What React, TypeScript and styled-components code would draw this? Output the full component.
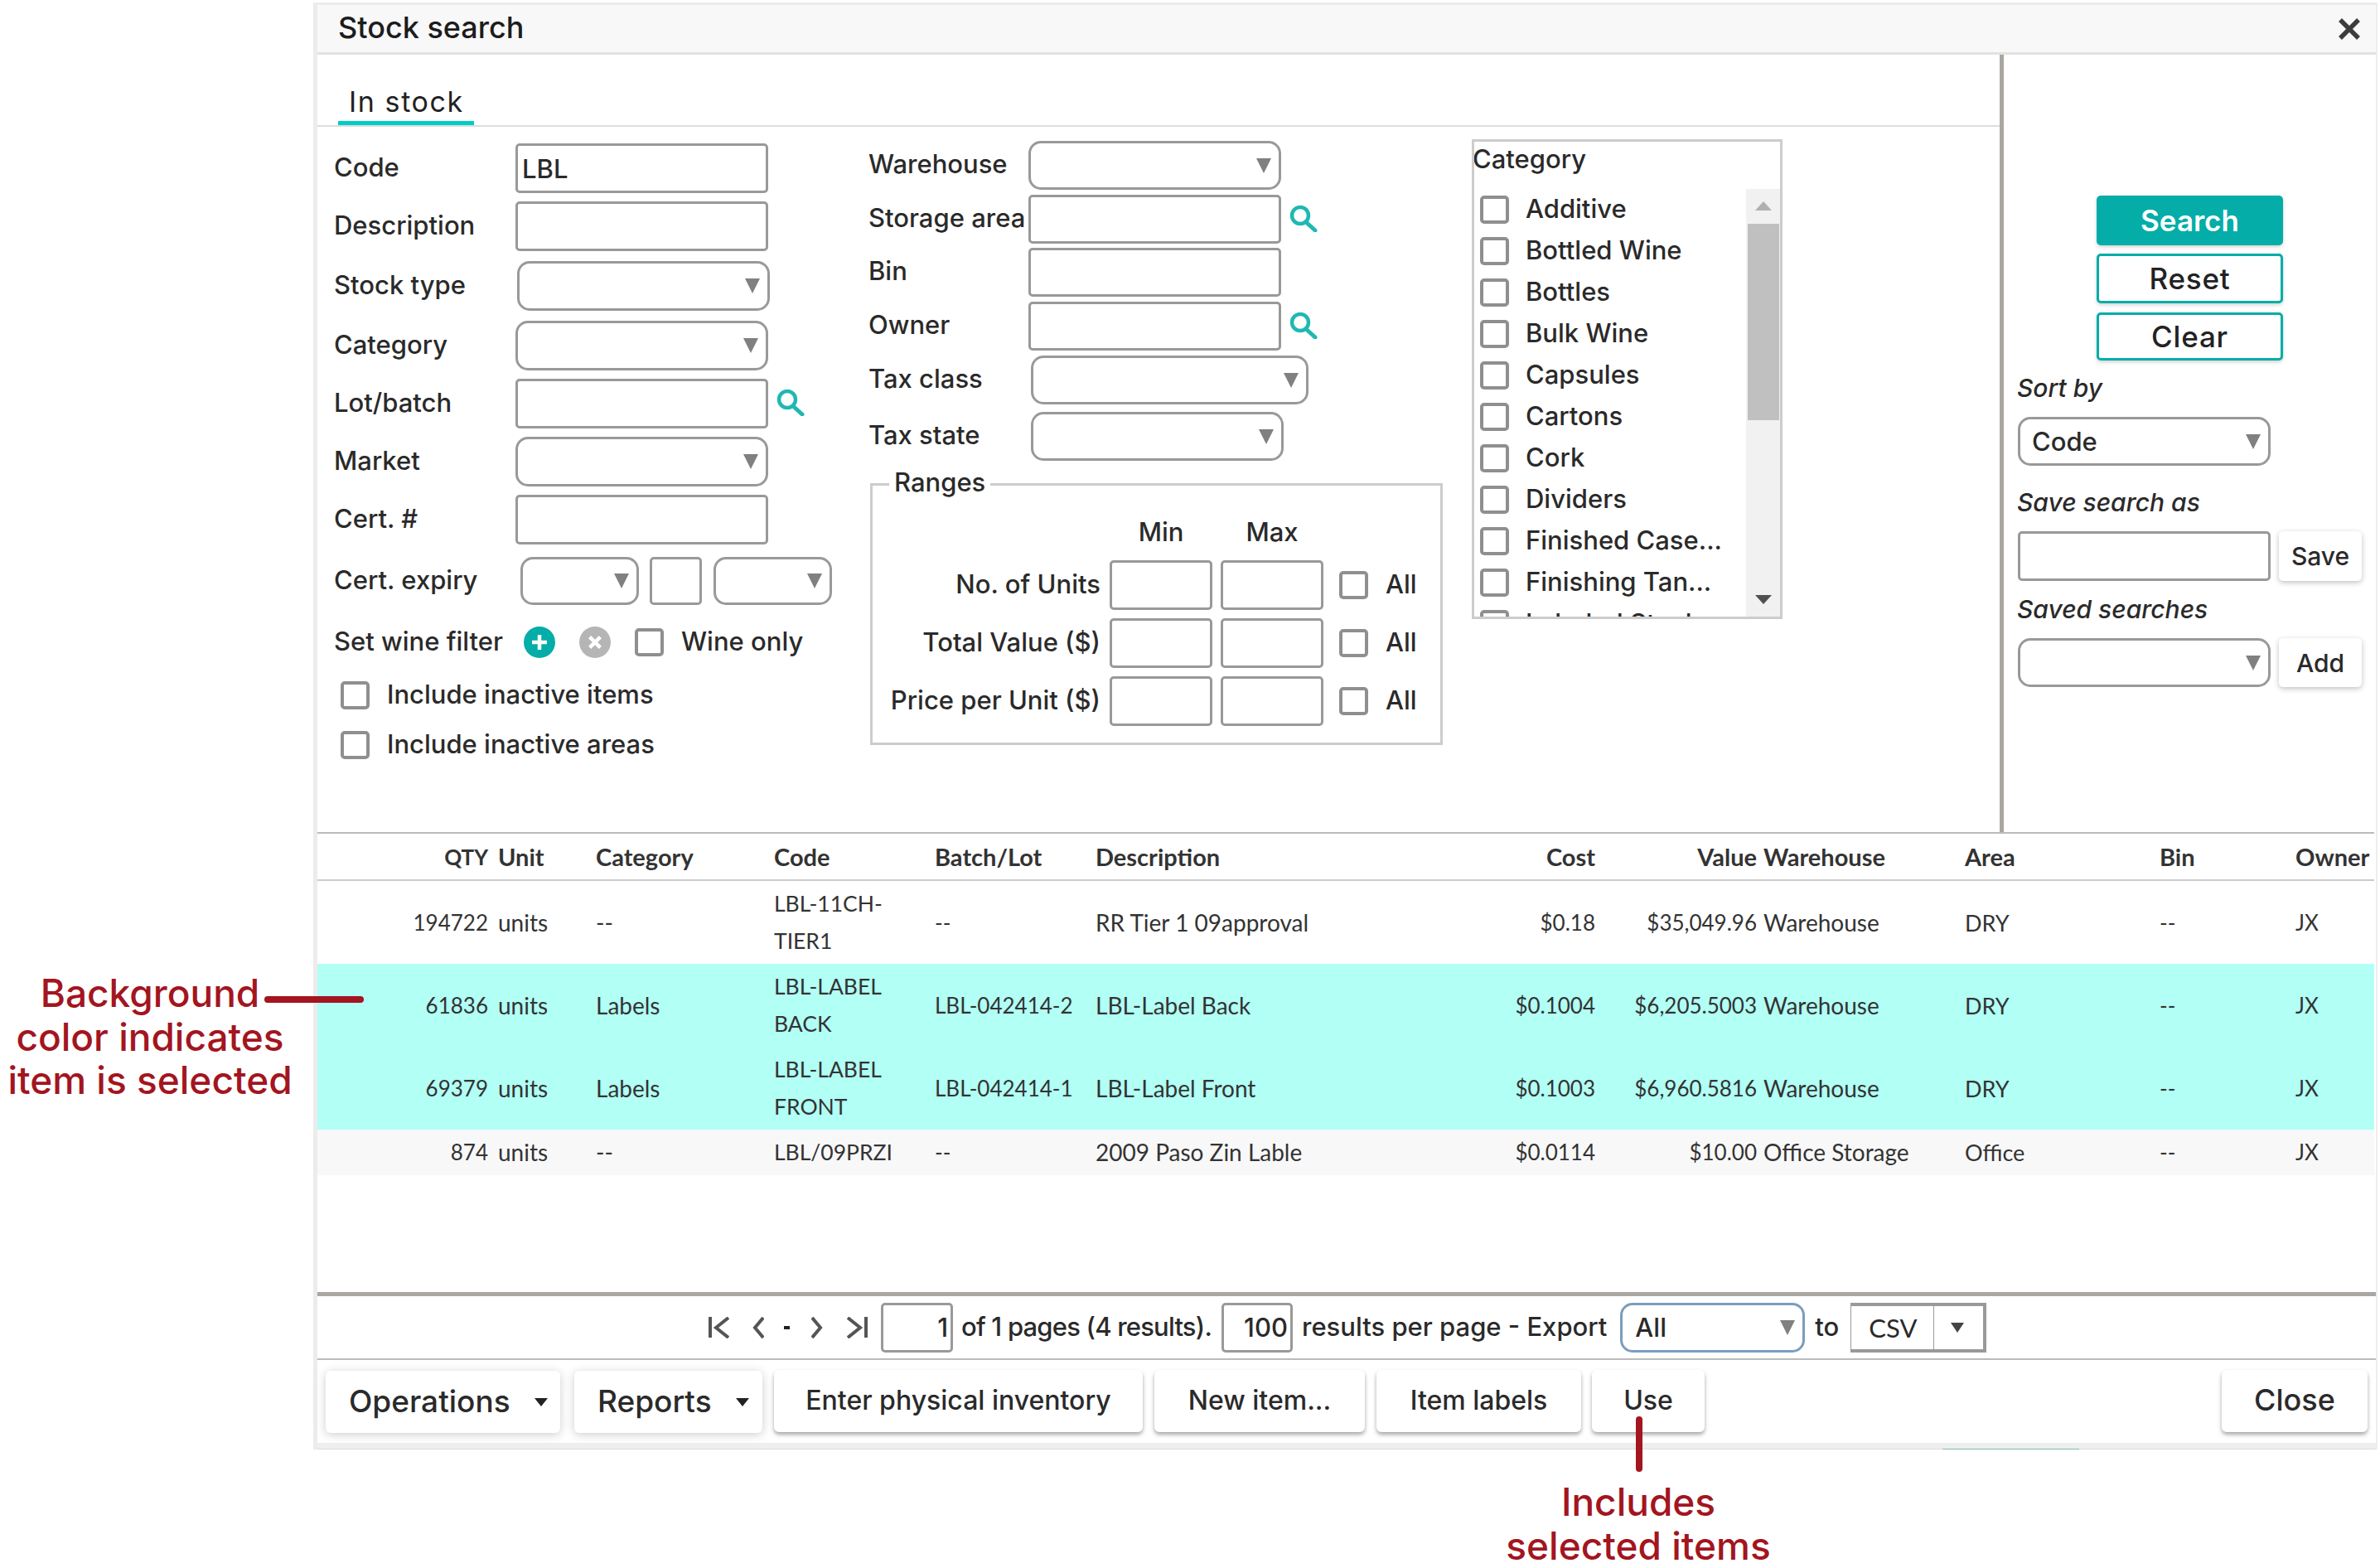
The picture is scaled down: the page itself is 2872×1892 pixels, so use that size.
import styled, { createGlobalStyle } from "styled-components";

const GlobalStyle = createGlobalStyle`
  html, body {
    margin: 0;
    background: #fff;
    overflow: hidden;
  }
  * { box-sizing: border-box; }
`;

const TEAL = "#04ada8";
const UI_FONT = `"Inter", "Open Sans", sans-serif`;
const TABLE_FONT = `"Lato", "Open Sans", sans-serif`;

const categories = [
  "Additive",
  "Bottled Wine",
  "Bottles",
  "Bulk Wine",
  "Capsules",
  "Cartons",
  "Cork",
  "Dividers",
  "Finished Case...",
  "Finishing Tan...",
  "Labeled Stock",
];

const columns = [
  { title: "QTY", width: 206, align: "right", size: 26, headSize: 26 },
  { title: "Unit", width: 130, pad: 12, size: 28 },
  { title: "Category", width: 215, size: 28 },
  { title: "Code", width: 194, padRight: 20, size: 26.5 },
  { title: "Batch/Lot", width: 194, size: 26 },
  { title: "Description", width: 463, size: 28 },
  { title: "Cost", width: 140, align: "right", size: 26 },
  { title: "Value", width: 195, align: "right", size: 26 },
  { title: "Warehouse", width: 251, pad: 8, size: 28 },
  { title: "Area", width: 235, size: 27 },
  { title: "Bin", width: 164, size: 26 },
  { title: "Owner", width: 95, size: 26 },
];

const rows = [
  { kind: "plain", cells: ["194722", "units", "--", "LBL-11CH-TIER1", "--", "RR Tier 1 09approval", "$0.18", "$35,049.96", "Warehouse", "DRY", "--", "JX"] },
  { kind: "selected", cells: ["61836", "units", "Labels", "LBL-LABEL BACK", "LBL-042414-2", "LBL-Label Back", "$0.1004", "$6,205.5003", "Warehouse", "DRY", "--", "JX"] },
  { kind: "selected", cells: ["69379", "units", "Labels", "LBL-LABEL FRONT", "LBL-042414-1", "LBL-Label Front", "$0.1003", "$6,960.5816", "Warehouse", "DRY", "--", "JX"] },
  { kind: "alt", cells: ["874", "units", "--", "LBL/09PRZI", "--", "2009 Paso Zin Lable", "$0.0114", "$10.00", "Office Storage", "Office", "--", "JX"] },
];

const ranges = ["No. of Units", "Total Value ($)", "Price per Unit ($)"];

function SearchIcon() {
  return (
    <IconSlot viewBox="0 0 34 32" width="34" height="32" fill="none" stroke="#1fb8b2">
      <circle cx="13" cy="12" r="10" strokeWidth="4.5" />
      <path d="M20 20 L31 30" strokeWidth="5" strokeLinecap="round" />
    </IconSlot>
  );
}

function CircleIcon({ color, rotate }: { color: string; rotate?: boolean }) {
  return (
    <BlurIcon viewBox="0 0 38 38" width="38" height="38">
      <circle cx="19" cy="19" r="19" fill={color} />
      <path
        d="M19 10 V28 M10 19 H28"
        stroke="#fff"
        strokeWidth="4.5"
        transform={rotate ? "rotate(45 19 19)" : undefined}
      />
    </BlurIcon>
  );
}

function PagerIcon({ d, width, after }: { d: string; width: number; after: number }) {
  return (
    <PagerGlyph
      $after={after}
      viewBox={`0 0 ${width} 26`}
      width={width}
      height="26"
      fill="none"
      stroke="#555"
    >
      <path d={d} strokeWidth="4" />
    </PagerGlyph>
  );
}

function Check() {
  return <CheckBox />;
}

export default function App() {
  return (
    <Page>
      <GlobalStyle />
      <Dialog>
        <TitleBar>
          <Title>Stock search</Title>
          <svg viewBox="0 0 26 26" width="26" height="26" stroke="#3c3c3c" strokeWidth="5.5">
            <path d="M2 2 L24 24 M24 2 L2 24" />
          </svg>
        </TitleBar>

        <TopSection>
          <SearchForm>
            <TabStrip>
              <Tab>In stock</Tab>
            </TabStrip>
            <FormArea>
              <FormColumn $width={645}>
                <FieldRow $top={20}>
                  <Label $width={219}>Code</Label>
                  <TextBox $width={305} defaultValue="LBL" readOnly />
                </FieldRow>
                <FieldRow $top={10}>
                  <Label $width={219}>Description</Label>
                  <TextBox $width={305} readOnly />
                </FieldRow>
                <FieldRow $top={12}>
                  <Label $width={221}>Stock type</Label>
                  <Select $width={305} />
                </FieldRow>
                <FieldRow $top={12}>
                  <Label $width={219}>Category</Label>
                  <Select $width={305} />
                </FieldRow>
                <FieldRow $top={10}>
                  <Label $width={219}>Lot/batch</Label>
                  <TextBox $width={305} readOnly />
                  <SearchSlot>
                    <SearchIcon />
                  </SearchSlot>
                </FieldRow>
                <FieldRow $top={10}>
                  <Label $width={219}>Market</Label>
                  <Select $width={305} />
                </FieldRow>
                <FieldRow $top={10}>
                  <Label $width={219}>Cert. #</Label>
                  <TextBox $width={305} readOnly />
                </FieldRow>
                <FieldRow $top={15}>
                  <Label $width={225}>Cert. expiry</Label>
                  <Select $width={143} $height={58} />
                  <TextBox $width={63} $height={58} $left={13} readOnly />
                  <Select $width={143} $height={58} $left={14} />
                </FieldRow>
                <WineRow>
                  <Label $width={229}>Set wine filter</Label>
                  <CircleIcon color={TEAL} />
                  <CircleSpacer />
                  <CircleIcon color="#b5b5b5" rotate />
                  <CircleSpacer />
                  <Check />
                  <CheckText>Wine only</CheckText>
                </WineRow>
                <InactiveRow $top={28}>
                  <Check />
                  <CheckText>Include inactive items</CheckText>
                </InactiveRow>
                <InactiveRow $top={26}>
                  <Check />
                  <CheckText>Include inactive areas</CheckText>
                </InactiveRow>
              </FormColumn>

              <FormColumn $width={728}>
                <FieldRow $top={17}>
                  <Label $width={193}>Warehouse</Label>
                  <Select $width={305} $height={59} />
                </FieldRow>
                <FieldRow $top={6}>
                  <Label $width={193}>Storage area</Label>
                  <TextBox $width={305} $height={59} readOnly />
                  <SearchSlot>
                    <SearchIcon />
                  </SearchSlot>
                </FieldRow>
                <FieldRow $top={5}>
                  <Label $width={193}>Bin</Label>
                  <TextBox $width={305} $height={59} readOnly />
                </FieldRow>
                <FieldRow $top={6}>
                  <Label $width={193}>Owner</Label>
                  <TextBox $width={305} $height={59} readOnly />
                  <SearchSlot>
                    <SearchIcon />
                  </SearchSlot>
                </FieldRow>
                <FieldRow $top={6}>
                  <Label $width={196}>Tax class</Label>
                  <Select $width={335} $height={59} />
                </FieldRow>
                <FieldRow $top={9}>
                  <Label $width={196}>Tax state</Label>
                  <Select $width={305} $height={59} />
                </FieldRow>
                <Ranges>
                  <RangesLegend>Ranges</RangesLegend>
                  <RangeGrid>
                    <span />
                    <RangeHead>Min</RangeHead>
                    <RangeHead>Max</RangeHead>
                    <span />
                    {ranges.map((name) => (
                      <RangeRow key={name}>
                        <RangeLabel>{name}</RangeLabel>
                        <TextBox $width={124} readOnly />
                        <TextBox $width={124} readOnly />
                        <RangeAll>
                          <Check />
                          <CheckText>All</CheckText>
                        </RangeAll>
                      </RangeRow>
                    ))}
                  </RangeGrid>
                </Ranges>
              </FormColumn>

              <CategoryBox>
                <CategoryTitle>Category</CategoryTitle>
                <CategoryBody>
                  <CategoryList>
                    {categories.map((name) => (
                      <CategoryItem key={name}>
                        <Check />
                        <CheckText $gap={20}>{name}</CheckText>
                      </CategoryItem>
                    ))}
                  </CategoryList>
                  <ScrollTrack>
                    <ScrollArrow $up />
                    <ScrollThumb />
                    <ScrollArrow />
                  </ScrollTrack>
                </CategoryBody>
              </CategoryBox>
            </FormArea>
          </SearchForm>

          <SidePanel>
            <ActionButton $primary>Search</ActionButton>
            <ActionButton>Reset</ActionButton>
            <ActionButton $height={58} $top={11}>Clear</ActionButton>
            <SideLabel $top={13}>Sort by</SideLabel>
            <SideRow>
              <Select $width={305} $height={59}>
                <SelectText $left={14}>Code</SelectText>
              </Select>
            </SideRow>
            <SideLabel $top={24}>Save search as</SideLabel>
            <SideRow>
              <TextBox $width={305} readOnly />
              <SmallButton>Save</SmallButton>
            </SideRow>
            <SideLabel $top={14}>Saved searches</SideLabel>
            <SideRow>
              <Select $width={305} $height={59} />
              <SmallButton>Add</SmallButton>
            </SideRow>
          </SidePanel>
        </TopSection>

        <TableArea>
          <ResultTable>
            <colgroup>
              {columns.map((col) => (
                <col key={col.title} width={col.width} />
              ))}
            </colgroup>
            <thead>
              <tr>
                {columns.map((col) => (
                  <HeadCell key={col.title} $align={col.align} $pad={col.pad} $size={col.headSize}>
                    {col.title}
                  </HeadCell>
                ))}
              </tr>
            </thead>
            <tbody>
              {rows.map((row) => (
                <DataRow key={row.cells[0]} $kind={row.kind}>
                  {row.cells.map((cell, i) => (
                    <DataCell
                      key={i}
                      $align={columns[i].align}
                      $pad={columns[i].pad}
                      $padRight={columns[i].padRight}
                      $size={columns[i].size}
                    >
                      {cell}
                    </DataCell>
                  ))}
                </DataRow>
              ))}
            </tbody>
          </ResultTable>
        </TableArea>

        <Pager>
          <PagerIcon width={25} after={28} d="M2 0 V25 M24 1 L9 13 L24 25" />
          <PagerIcon width={14} after={24} d="M13 1 L3 13 L13 25" />
          <PagerDash />
          <PagerIcon width={14} after={29} d="M1 1 L11 13 L1 25" />
          <PagerIcon width={25} after={16} d="M1 1 L16 13 L1 25 M23 0 V25" />
          <PageInput $width={87} defaultValue="1" readOnly />
          <PagerText $left={10} $tight>of 1 pages (4 results).</PagerText>
          <PageInput $width={86} $left={12} defaultValue="100" readOnly />
          <PagerText $left={11}>results per page - Export</PagerText>
          <Select $width={223} $focused $left={16}>
            <SelectText $left={15}>All</SelectText>
          </Select>
          <PagerText $left={12}>to</PagerText>
          <ComboBox>
            <ComboValue>CSV</ComboValue>
            <ComboArrow />
          </ComboBox>
        </Pager>

        <Footer>
          <MenuButton $width={283}>
            Operations
            <MenuCaret />
          </MenuButton>
          <MenuButton $width={227} $left={17}>
            Reports
            <MenuCaret />
          </MenuButton>
          <FooterButton $width={445} $left={14}>Enter physical inventory</FooterButton>
          <FooterButton $width={254} $left={14}>New item...</FooterButton>
          <FooterButton $width={247} $left={14}>Item labels</FooterButton>
          <FooterButton $width={136} $left={13}>Use</FooterButton>
          <CloseButton $width={176}>Close</CloseButton>
        </Footer>
        <BottomStrip>
          <StripMark />
        </BottomStrip>
      </Dialog>

      <NoteLeft>
        Background
        <br />
        color indicates
        <br />
        item is selected
      </NoteLeft>
      <LeaderLeft />
      <LeaderDown />
      <NoteBottom>
        Includes
        <br />
        selected items
      </NoteBottom>
    </Page>
  );
}

const Page = styled.div`
  position: relative;
  width: 2872px;
  height: 1892px;
  padding: 3px 0 0 378px;
  font-family: ${UI_FONT};
  color: #2a2a2a;
`;

const Dialog = styled.div`
  width: 2491px;
  height: 1746px;
  display: flex;
  flex-direction: column;
  background: #fff;
  border-top: 3px solid #ececec;
  border-left: 5px solid #ececec;
  border-right: 2px solid #eee;
`;

const TitleBar = styled.div`
  flex: none;
  height: 60px;
  display: flex;
  align-items: center;
  justify-content: space-between;
  padding: 0 19px 0 25px;
  background: #f8f8f8;
  border-bottom: 3px solid #e2e2e2;
`;

const Title = styled.div`
  padding-bottom: 3px;
  font-size: 36px;
  font-weight: 500;
  color: #1c1c1c;
`;

const TopSection = styled.div`
  flex: none;
  height: 938px;
  display: flex;
`;

const SearchForm = styled.div`
  flex: none;
  width: 2035px;
  border-right: 5px solid #aaa6a1;
`;

const TabStrip = styled.div`
  height: 87px;
  display: flex;
  align-items: flex-end;
  padding-left: 25px;
  border-bottom: 2px solid #ddd;
`;

const Tab = styled.div`
  width: 164px;
  height: 47px;
  padding-left: 13px;
  font-size: 34px;
  letter-spacing: 1.6px;
  line-height: 38px;
  color: #222;
  border-bottom: 5px solid #00cdc4;
`;

const FormArea = styled.div`
  display: flex;
  padding-left: 20px;
`;

const FormColumn = styled.div<{ $width: number }>`
  flex: none;
  width: ${({ $width }) => $width}px;
`;

const FieldRow = styled.div<{ $top: number }>`
  display: flex;
  align-items: center;
  margin-top: ${({ $top }) => $top}px;
`;

const Label = styled.div<{ $width: number }>`
  flex: none;
  width: ${({ $width }) => $width}px;
  padding-bottom: 4px;
  font-size: 31px;
  font-weight: 500;
  white-space: nowrap;
`;

const TextBox = styled.input<{ $width: number; $height?: number; $left?: number }>`
  flex: none;
  width: ${({ $width }) => $width}px;
  height: ${({ $height }) => $height ?? 60}px;
  margin: 0 0 0 ${({ $left }) => $left ?? 0}px;
  padding: 0 5px;
  font: 500 31px ${UI_FONT};
  color: #2a2a2a;
  background: #fff;
  border: 3px solid #999;
  border-radius: 5px;
  outline: none;
`;

const Select = styled.div<{ $width: number; $height?: number; $left?: number; $focused?: boolean }>`
  position: relative;
  flex: none;
  display: flex;
  align-items: center;
  width: ${({ $width }) => $width}px;
  height: ${({ $height }) => $height ?? 60}px;
  margin-left: ${({ $left }) => $left ?? 0}px;
  background: #fff;
  border: 3px solid ${({ $focused }) => ($focused ? "#7a9dbe" : "#999")};
  border-radius: 15px;

  &::after {
    content: "";
    position: absolute;
    right: 9px;
    top: 50%;
    margin-top: -9px;
    border-style: solid;
    border-width: 18px 9px 0 9px;
    border-color: #808080 transparent transparent transparent;
  }
`;

const SelectText = styled.span<{ $left: number }>`
  padding-left: ${({ $left }) => $left}px;
  font-size: 31px;
  font-weight: 500;
`;

const IconSlot = styled.svg`
  display: block;
`;

const BlurIcon = styled.svg`
  flex: none;
  display: block;
`;

const SearchSlot = styled.div`
  flex: none;
  margin: 0 0 2px 10px;
`;

const CheckBox = styled.div`
  flex: none;
  width: 35px;
  height: 34px;
  background: #fff;
  border: 4px solid #8f8f8f;
  border-radius: 5px;
  filter: blur(0.6px);
`;

const CheckText = styled.span<{ $gap?: number }>`
  margin-left: ${({ $gap }) => $gap ?? 21}px;
  padding-bottom: 4px;
  font-size: 31px;
  font-weight: 500;
  white-space: nowrap;
`;

const WineRow = styled.div`
  display: flex;
  align-items: center;
  height: 38px;
  margin-top: 26px;
`;

const CircleSpacer = styled.div`
  flex: none;
  width: 29px;
`;

const InactiveRow = styled.div<{ $top: number }>`
  display: flex;
  align-items: center;
  height: 34px;
  margin: ${({ $top }) => $top}px 0 0 8px;
`;

const Ranges = styled.fieldset`
  width: 691px;
  margin: 8px 0 0 2px;
  padding: 0 0 20px;
  border: 3px solid #ccc;
`;

const RangesLegend = styled.legend`
  height: 40px;
  margin-left: 20px;
  padding: 0 6px;
  font-size: 31px;
  font-weight: 500;
  line-height: 36px;
`;

const RangeGrid = styled.div`
  display: grid;
  grid-template-columns: 276px 124px 124px auto;
  grid-template-rows: 62px 60px 60px 60px;
  column-gap: 10px;
  row-gap: 10px;
`;

const RangeHead = styled.div`
  align-self: end;
  padding-bottom: 2px;
  font-size: 31px;
  font-weight: 500;
  line-height: 44px;
  text-align: center;
`;

const RangeRow = styled.div`
  display: contents;
`;

const RangeLabel = styled.div`
  align-self: center;
  margin-right: 1px;
  padding-bottom: 4px;
  font-size: 31px;
  font-weight: 500;
  text-align: right;
  white-space: nowrap;
`;

const RangeAll = styled.div`
  display: flex;
  align-items: center;
  margin-left: 9px;
`;

const CategoryBox = styled.div`
  flex: none;
  display: flex;
  flex-direction: column;
  width: 375px;
  height: 579px;
  margin-top: 15px;
  overflow: hidden;
  border: 3px solid #ccc;
`;

const CategoryTitle = styled.div`
  flex: none;
  height: 57px;
  font-size: 31px;
  font-weight: 500;
  line-height: 42px;
  text-indent: -2px;
`;

const CategoryBody = styled.div`
  flex: 1;
  min-height: 0;
  display: flex;
`;

const CategoryList = styled.div`
  flex: 1;
  padding: 8px 0 0 7px;
  overflow: hidden;
`;

const CategoryItem = styled.div`
  display: flex;
  align-items: center;
  height: 34px;
  margin-bottom: 16px;
`;

const ScrollTrack = styled.div`
  flex: none;
  display: flex;
  flex-direction: column;
  align-items: center;
  width: 41px;
  background: #f1f1f1;
`;

const ScrollArrow = styled.div<{ $up?: boolean }>`
  flex: none;
  width: 0;
  height: 0;
  margin: ${({ $up }) => ($up ? "15px 0 16px" : "auto 0 15px")};
  border-style: solid;
  border-width: ${({ $up }) => ($up ? "0 10px 11px 10px" : "11px 10px 0 10px")};
  border-color: ${({ $up }) =>
    $up
      ? "transparent transparent #b0b0b0 transparent"
      : "#505050 transparent transparent transparent"};
`;

const ScrollThumb = styled.div`
  flex: none;
  width: 38px;
  height: 237px;
  background: #c0c0c0;
`;

const SidePanel = styled.div`
  flex: 1;
  padding: 170px 0 0 17px;
`;

const ActionButton = styled.div<{ $primary?: boolean; $height?: number; $top?: number }>`
  display: flex;
  align-items: center;
  justify-content: center;
  width: 225px;
  height: ${({ $height }) => $height ?? 60}px;
  margin: ${({ $top }) => $top ?? 10}px 0 0 95px;
  font-size: 35px;
  letter-spacing: ${({ $primary }) => ($primary ? 0 : 0.8)}px;
  font-weight: ${({ $primary }) => ($primary ? 600 : 500)};
  color: ${({ $primary }) => ($primary ? "#fff" : "#222")};
  background: ${({ $primary }) => ($primary ? TEAL : "#fff")};
  border: 3px solid ${TEAL};
  border-radius: 5px;
  box-shadow: 0 2px 4px rgba(0, 0, 0, 0.18);

  &:first-child {
    margin-top: 0;
  }
`;

const SideLabel = styled.div<{ $top: number }>`
  height: 40px;
  margin: ${({ $top }) => $top}px 0 0 -1px;
  font-size: 30px;
  font-style: italic;
  font-weight: 500;
  line-height: 40px;
`;

const SideRow = styled.div`
  display: flex;
  gap: 10px;
  margin-top: 15px;
`;

const SmallButton = styled.div`
  flex: none;
  display: flex;
  align-items: center;
  justify-content: center;
  width: 100px;
  font-size: 30px;
  font-weight: 500;
  background: #fff;
  border-radius: 5px;
  box-shadow: 0 2px 6px rgba(0, 0, 0, 0.25);
`;

const TableArea = styled.div`
  flex: none;
  height: 555px;
`;

const ResultTable = styled.table`
  width: 2482px;
  table-layout: fixed;
  border-collapse: separate;
  border-spacing: 0;
  font-family: ${TABLE_FONT};
  color: #333;
`;

const HeadCell = styled.th<{ $align?: string; $pad?: number; $size?: number }>`
  height: 59px;
  padding: 0 0 0 ${({ $pad }) => $pad ?? 0}px;
  font-size: ${({ $size }) => $size ?? 29}px;
  font-weight: 700;
  text-align: ${({ $align }) => $align ?? "left"};
  white-space: nowrap;
  border-top: 2px solid #bbb;
  border-bottom: 2px solid #ccc;
`;

const DataRow = styled.tr<{ $kind: string }>`
  height: ${({ $kind }) => ($kind === "alt" ? 55 : 100)}px;
  background: ${({ $kind }) =>
    $kind === "selected" ? "#b1fff5" : $kind === "alt" ? "#f8f8f8" : "#fff"};
`;

const DataCell = styled.td<{ $align?: string; $pad?: number; $padRight?: number; $size: number }>`
  padding: 0 ${({ $padRight }) => $padRight ?? 0}px 0 ${({ $pad }) => $pad ?? 0}px;
  font-size: ${({ $size }) => $size}px;
  line-height: 45px;
  text-align: ${({ $align }) => $align ?? "left"};
  vertical-align: middle;
`;

const Pager = styled.div`
  flex: none;
  height: 82px;
  display: flex;
  align-items: center;
  padding-left: 472px;
  border-top: 5px solid #aaa6a1;
  border-bottom: 2px solid #bbb;
`;

const PagerGlyph = styled.svg<{ $after: number }>`
  flex: none;
  display: block;
  margin-right: ${({ $after }) => $after}px;
  filter: blur(0.5px);
`;

const PagerDash = styled.div`
  flex: none;
  width: 7px;
  height: 4px;
  margin-right: 26px;
  background: #222;
`;

const PageInput = styled(TextBox)`
  padding: 0 3px;
  text-align: right;
`;

const PagerText = styled.span<{ $left: number; $tight?: boolean }>`
  flex: none;
  margin-left: ${({ $left }) => $left}px;
  padding-bottom: 3px;
  font-size: 31px;
  font-weight: 500;
  letter-spacing: ${({ $tight }) => ($tight ? -0.8 : 0)}px;
  white-space: nowrap;
`;

const ComboBox = styled.div`
  flex: none;
  display: flex;
  width: 164px;
  height: 60px;
  margin-left: 14px;
  border-style: solid;
  border-color: #999;
  border-width: 4px 4px 4px 1px;
`;

const ComboValue = styled.div`
  flex: none;
  width: 100px;
  padding: 3px 0 0 21px;
  font-family: ${TABLE_FONT};
  font-size: 31px;
  line-height: 46px;
  border-right: 1px solid #999;
`;

const ComboArrow = styled.div`
  flex: none;
  width: 0;
  height: 0;
  margin: 20px 0 0 20px;
  border-style: solid;
  border-width: 12px 8px 0 8px;
  border-color: #444 transparent transparent transparent;
`;

const Footer = styled.div`
  flex: none;
  height: 100px;
  display: flex;
  align-items: flex-start;
  padding: 12px 10px 0;
`;

const FooterButton = styled.div<{ $width: number; $left?: number }>`
  flex: none;
  display: flex;
  align-items: center;
  justify-content: center;
  width: ${({ $width }) => $width}px;
  height: 75px;
  margin-left: ${({ $left }) => $left ?? 0}px;
  padding-bottom: 3px;
  font-size: 32px;
  font-weight: 500;
  background: #fff;
  border-radius: 6px;
  box-shadow: 0 3px 5px rgba(0, 0, 0, 0.35);
`;

const MenuButton = styled(FooterButton)`
  justify-content: flex-start;
  gap: 29px;
  margin-top: 1px;
  padding-left: 28px;
  font-size: 37px;
  box-shadow: 0 2px 12px rgba(0, 0, 0, 0.2);
`;

const MenuCaret = styled.span`
  flex: none;
  width: 0;
  height: 0;
  margin-top: 3px;
  border-style: solid;
  border-width: 10px 8px 0 8px;
  border-color: #222 transparent transparent transparent;
`;

const CloseButton = styled(FooterButton)`
  margin-left: auto;
  font-size: 36px;
`;

const BottomStrip = styled.div`
  flex: 1;
  position: relative;
  background: #eee;
  border-bottom: 1px solid #ddd;
`;

const StripMark = styled.div`
  position: absolute;
  left: 1961px;
  bottom: -1px;
  width: 165px;
  height: 1px;
  background: #7fb8b0;
`;

const NoteLeft = styled.div`
  position: absolute;
  left: 1px;
  top: 1172px;
  width: 360px;
  font-size: 46px;
  font-weight: 500;
  line-height: 52.5px;
  text-align: center;
  color: #a3151f;
`;

const NoteBottom = styled.div`
  position: absolute;
  left: 1777px;
  top: 1786px;
  width: 400px;
  font-size: 46px;
  font-weight: 500;
  line-height: 52.5px;
  text-align: center;
  color: #a3151f;
`;

const LeaderLeft = styled.div`
  position: absolute;
  left: 319px;
  top: 1202px;
  width: 120px;
  height: 8px;
  background: #a3151f;
  border-radius: 4px;
`;

const LeaderDown = styled.div`
  position: absolute;
  left: 1974px;
  top: 1709px;
  width: 8px;
  height: 67px;
  background: #a3151f;
  border-radius: 4px;
`;
